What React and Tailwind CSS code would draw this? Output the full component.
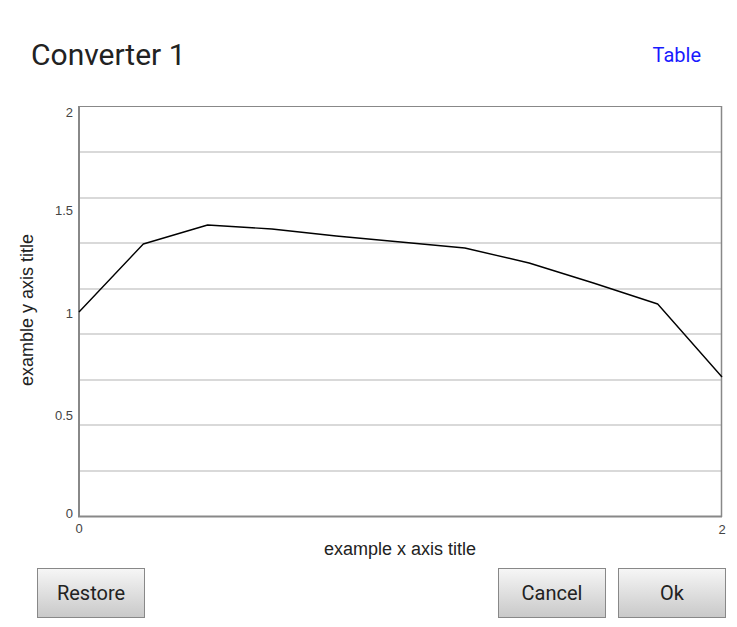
import React from "react";

const ys = [312, 244, 225, 229, 236, 242, 248, 263, 283, 304, 377];
const x0 = 79;
const x1 = 722;
const pts = ys.map((y, i) => `${(x0 + ((x1 - x0) * i) / 10).toFixed(1)},${y}`).join(" ");
const grid = [152, 198, 243, 289, 334, 380, 425, 471];

function Btn({ children }) {
  return (
    <button className="w-[108px] h-[50px] border border-[#888] bg-gradient-to-b from-[#f6f6f6] to-[#c9c9c9] text-[20px] text-[#222] font-['Roboto',sans-serif]">
      {children}
    </button>
  );
}

export default function App() {
  return (
    <div className="w-[737px] h-[627px] bg-white overflow-hidden flex flex-col">
      <div className="flex justify-between pl-[31px] pr-[36px] pt-[36px] h-[96px] items-start">
        <h1 className="text-[30px] leading-[38px] text-[#222] font-['Roboto',sans-serif]">Converter 1</h1>
        <a className="text-[20px] leading-[38px] text-[#1a1aff] font-['Roboto',sans-serif]">Table</a>
      </div>
      <svg width="737" height="464" viewBox="0 96 737 464" className="block">
        <rect x="79" y="106.5" width="642.5" height="410" fill="white" stroke="#888" strokeWidth="1" />
        {grid.map((g) => (
          <line key={g} x1="80" x2="721" y1={g} y2={g} stroke="#ccc" strokeWidth="1.5" />
        ))}
        <line x1="79" x2="79" y1="106" y2="517" stroke="#888" strokeWidth="2" />
        <line x1="78" x2="722" y1="516.5" y2="516.5" stroke="#888" strokeWidth="2" />
        <line x1="721.5" x2="721.5" y1="106" y2="517" stroke="#888" strokeWidth="1.5" />
        <polyline points={pts} fill="none" stroke="#000" strokeWidth="1.4" strokeLinejoin="round" />
        <g fontFamily="'Liberation Sans', Arial, sans-serif" fontSize="13" fill="#444" textAnchor="end">
          <text x="73" y="117">2</text>
          <text x="73" y="215">1.5</text>
          <text x="73" y="318">1</text>
          <text x="73" y="420">0.5</text>
          <text x="73" y="518">0</text>
        </g>
        <g fontFamily="'Liberation Sans', Arial, sans-serif" fontSize="13" fill="#444" textAnchor="middle">
          <text x="79" y="533">0</text>
          <text x="722" y="534">2</text>
        </g>
        <text x="400" y="555" textAnchor="middle" fontFamily="'Liberation Sans', Arial, sans-serif" fontSize="18" fill="#222">example x axis title</text>
        <text x="0" y="0" transform="translate(33 310) rotate(-90)" textAnchor="middle" fontFamily="'Liberation Sans', Arial, sans-serif" fontSize="18" fill="#222">examble y axis title</text>
      </svg>
      <div className="flex justify-between pl-[37px] pr-[11px] pt-[8px]">
        <Btn>Restore</Btn>
        <div className="flex gap-[12px]">
          <Btn>Cancel</Btn>
          <Btn>Ok</Btn>
        </div>
      </div>
    </div>
  );
}
